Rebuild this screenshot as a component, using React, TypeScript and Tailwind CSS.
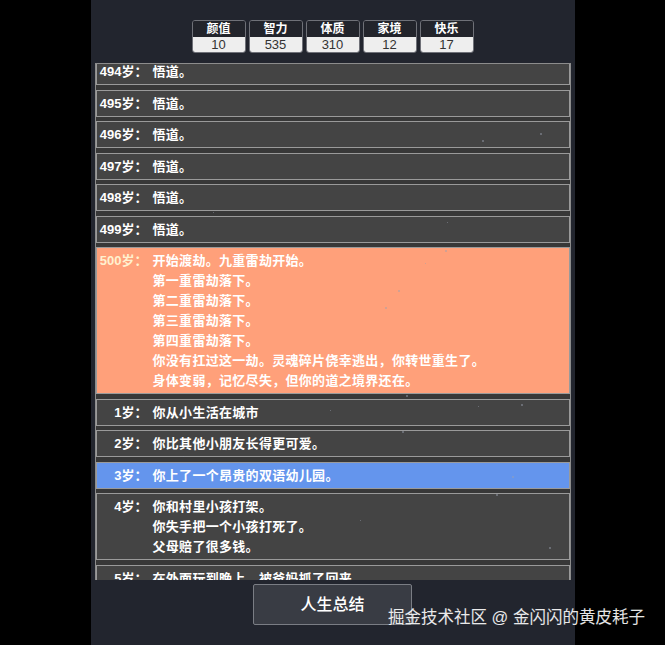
import React from 'react';

type Row = {
  age: number;
  lines: string[];
  tone?: 'salmon' | 'blue';
};

const stats = [
  { label: '颜值', value: 10 },
  { label: '智力', value: 535 },
  { label: '体质', value: 310 },
  { label: '家境', value: 12 },
  { label: '快乐', value: 17 },
];

const rows: Row[] = [
  { age: 494, lines: ['悟道。'] },
  { age: 495, lines: ['悟道。'] },
  { age: 496, lines: ['悟道。'] },
  { age: 497, lines: ['悟道。'] },
  { age: 498, lines: ['悟道。'] },
  { age: 499, lines: ['悟道。'] },
  {
    age: 500,
    tone: 'salmon',
    lines: [
      '开始渡劫。九重雷劫开始。',
      '第一重雷劫落下。',
      '第二重雷劫落下。',
      '第三重雷劫落下。',
      '第四重雷劫落下。',
      '你没有扛过这一劫。灵魂碎片侥幸逃出，你转世重生了。',
      '身体变弱，记忆尽失，但你的道之境界还在。',
    ],
  },
  { age: 1, lines: ['你从小生活在城市'] },
  { age: 2, lines: ['你比其他小朋友长得更可爱。'] },
  { age: 3, tone: 'blue', lines: ['你上了一个昂贵的双语幼儿园。'] },
  { age: 4, lines: ['你和村里小孩打架。', '你失手把一个小孩打死了。', '父母赔了很多钱。'] },
  { age: 5, lines: ['在外面玩到晚上，被爸妈抓了回来。'] },
];

const dots = [
  [482, 140, 2], [540, 133, 2], [425, 263, 1], [398, 290, 2], [445, 250, 2],
  [385, 307, 2], [406, 395, 2], [402, 431, 2], [330, 410, 1], [276, 258, 1],
  [521, 404, 2], [478, 406, 1], [512, 476, 2], [496, 494, 2], [295, 378, 1],
  [213, 212, 1], [447, 222, 1], [549, 547, 2], [183, 456, 1], [360, 520, 1],
];

const rowTone = (tone?: Row['tone']) => {
  if (tone === 'salmon') return 'bg-[#ffa07a]';
  if (tone === 'blue') return 'bg-[#6495ed]';
  return 'bg-[#444444]';
};

export default function App() {
  return (
    <div
      className="relative min-h-[645px] w-full bg-black"
      style={{ fontFamily: '"Liberation Sans", "Noto Sans CJK SC", sans-serif' }}
    >
      <div className="mx-auto flex h-[645px] w-[484px] flex-col items-center bg-[#22252e] pt-[20px]">
        <div className="flex gap-[3px]">
          {stats.map((s) => (
            <div key={s.label} className="w-[54px] overflow-hidden rounded-[3px] border border-[#6f7178]">
              <div className="h-[16px] bg-[#22242b] text-center text-[12px] font-bold leading-[16px] text-white">
                {s.label}
              </div>
              <div className="h-[15px] bg-[#eeeeee] text-center text-[13px] leading-[15px] text-[#333333]">
                {s.value}
              </div>
            </div>
          ))}
        </div>

        <div className="mt-[10px] h-[517px] w-[476px] overflow-hidden border-x border-t border-[#8c8c8c] bg-[#383838]">
          <div className="mt-[-6px] flex flex-col gap-[4.5px]">
            {rows.map((r) => (
              <div
                key={r.age}
                className={`flex border border-[#9a9a9a] pt-[3px] pb-[2px] text-[13px] font-bold leading-[20px] text-white ${rowTone(r.tone)}`}
              >
                <span className={`w-[51px] shrink-0 text-right ${r.tone === 'salmon' ? 'text-[#fff1cf]' : ''}`}>
                  {r.age}岁：
                </span>
                <div className="ml-[5px] flex flex-col tracking-[0.3px]">
                  {r.lines.map((l, i) => (
                    <span key={i} className="whitespace-nowrap">{l}</span>
                  ))}
                </div>
              </div>
            ))}
          </div>
        </div>

        <button className="mt-[4px] h-[41px] w-[159px] rounded-[2px] border border-[#7a7d84] bg-[#393c44] text-[16px] font-medium text-white">
          人生总结
        </button>
      </div>

      {dots.map(([x, y, s], i) => (
        <span
          key={i}
          className="pointer-events-none absolute rounded-full bg-[#9aa0b0] opacity-60"
          style={{ left: x, top: y, width: s, height: s }}
        />
      ))}

      <div className="pointer-events-none absolute left-[388px] top-[606px] whitespace-nowrap text-[16.5px] leading-[22px] text-white/90">
        掘金技术社区 @ 金闪闪的黄皮耗子
      </div>
    </div>
  );
}
